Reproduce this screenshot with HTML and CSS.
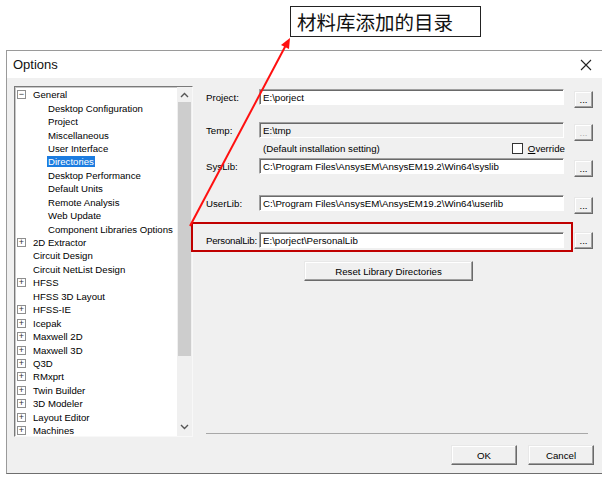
FILE: index.html
```html
<!DOCTYPE html>
<html lang="zh-CN">
<head>
    <meta charset="UTF-8">
    <title>Options</title>
    <link rel="stylesheet" href="styles.css">
</head>
<body>
    <!-- Callout over the screenshot -->
    <div class="callout">材料库添加的目录</div>
    <svg class="arrow" width="602" height="479" viewBox="0 0 602 479">
        <line x1="190" y1="226" x2="286" y2="45" stroke="#ff1010" stroke-width="2"/>
        <polygon points="290,38 289,49 281,45" fill="#ff1010"/>
    </svg>

    <div class="dialog">
        <div class="titlebar">
            <span class="title">Options</span>
            <svg class="close" width="12" height="12" viewBox="0 0 12 12">
                <path d="M1 1 L11 11 M11 1 L1 11" stroke="#222" stroke-width="1.1" fill="none"/>
            </svg>
        </div>

        <div class="body">
            <div class="main">
                <!-- Category tree -->
                <div class="tree">
                    <div class="tree-list">
                        <div class="node"><span class="toggle">&minus;</span>General</div>
                        <div class="node child">Desktop Configuration</div>
                        <div class="node child">Project</div>
                        <div class="node child">Miscellaneous</div>
                        <div class="node child">User Interface</div>
                        <div class="node child"><span class="selected">Directories</span></div>
                        <div class="node child">Desktop Performance</div>
                        <div class="node child">Default Units</div>
                        <div class="node child">Remote Analysis</div>
                        <div class="node child">Web Update</div>
                        <div class="node child">Component Libraries Options</div>
                        <div class="node"><span class="toggle">+</span>2D Extractor</div>
                        <div class="node">Circuit Design</div>
                        <div class="node">Circuit NetList Design</div>
                        <div class="node"><span class="toggle">+</span>HFSS</div>
                        <div class="node">HFSS 3D Layout</div>
                        <div class="node"><span class="toggle">+</span>HFSS-IE</div>
                        <div class="node"><span class="toggle">+</span>Icepak</div>
                        <div class="node"><span class="toggle">+</span>Maxwell 2D</div>
                        <div class="node"><span class="toggle">+</span>Maxwell 3D</div>
                        <div class="node"><span class="toggle">+</span>Q3D</div>
                        <div class="node"><span class="toggle">+</span>RMxprt</div>
                        <div class="node"><span class="toggle">+</span>Twin Builder</div>
                        <div class="node"><span class="toggle">+</span>3D Modeler</div>
                        <div class="node"><span class="toggle">+</span>Layout Editor</div>
                        <div class="node"><span class="toggle">+</span>Machines</div>
                    </div>
                    <div class="scrollbar">
                        <svg class="chev" width="9" height="6" viewBox="0 0 9 6"><path d="M1 5 L4.5 1.5 L8 5" stroke="#555" stroke-width="1.4" fill="none"/></svg>
                        <div class="thumb"></div>
                        <svg class="chev chev-down" width="9" height="6" viewBox="0 0 9 6"><path d="M1 1 L4.5 4.5 L8 1" stroke="#555" stroke-width="1.4" fill="none"/></svg>
                    </div>
                </div>

                <!-- Directories page -->
                <div class="page">
                    <div class="row row-project">
                        <div class="field">
                            <label>Project:</label>
                            <div class="input">E:\porject</div>
                        </div>
                        <button class="browse">...</button>
                    </div>

                    <div class="row row-temp">
                        <div class="field">
                            <label>Temp:</label>
                            <div class="input disabled">E:\tmp</div>
                        </div>
                        <button class="browse" disabled>...</button>
                    </div>

                    <div class="note">
                        <span>(Default installation setting)</span>
                        <span class="check"><span class="box"></span><u>O</u>verride</span>
                    </div>

                    <div class="row row-syslib">
                        <div class="field">
                            <label>SysLib:</label>
                            <div class="input">C:\Program Files\AnsysEM\AnsysEM19.2\Win64\syslib</div>
                        </div>
                        <button class="browse">...</button>
                    </div>

                    <div class="row row-userlib">
                        <div class="field">
                            <label>UserLib:</label>
                            <div class="input">C:\Program Files\AnsysEM\AnsysEM19.2\Win64\userlib</div>
                        </div>
                        <button class="browse">...</button>
                    </div>

                    <div class="row row-personal">
                        <div class="field highlight">
                            <label class="tight">PersonalLib:</label>
                            <div class="input">E:\porject\PersonalLib</div>
                        </div>
                        <button class="browse">...</button>
                    </div>

                    <button class="btn reset">Reset Library Directories</button>

                    <div class="page-rule"></div>
                </div>
            </div>

            <div class="footer">
                <button class="btn">OK</button>
                <button class="btn">Cancel</button>
            </div>
        </div>
    </div>
</body>
</html>
```

FILE: styles.css
```css
body {
    margin: 0;
    width: 602px;
    height: 479px;
    background-color: white;
    font-family: "Liberation Sans", Arial, sans-serif;
    font-size: 9.7px;
    color: #000;
    position: relative;
    overflow: hidden;
}

/* Annotation */
.callout {
    position: absolute;
    left: 290px;
    top: 6px;
    width: 183px;
    height: 29px;
    border: 1px solid #222;
    background-color: white;
    font-family: "Noto Sans CJK SC", sans-serif;
    font-size: 19.5px;
    line-height: 29px;
    padding-left: 6px;
    color: #111;
    z-index: 2;
}

.arrow {
    position: absolute;
    left: 0;
    top: 0;
    z-index: 3;
    pointer-events: none;
}

/* Dialog frame */
.dialog {
    margin: 50px 0 0 6px;
    width: 596px;
    border-top: 1px solid #9a9a9a;
    border-left: 1px solid #9a9a9a;
    border-bottom: 1px solid #6e6e6e;
}

.titlebar {
    height: 27px;
    background-color: white;
    display: flex;
    align-items: center;
    justify-content: space-between;
    padding: 0 11px 0 6px;
}

.title {
    font-size: 13px;
    color: #111;
}

.body {
    background-color: #f0f0f0;
    padding-bottom: 8px;
}

.main {
    display: flex;
    height: 362px;
}

/* Tree */
.tree {
    margin: 8px 0 0 7px;
    width: 177px;
    height: 349px;
    display: flex;
    background-color: white;
    border: 1px solid;
    border-color: #7a7a7a #f8f8f8 #f8f8f8 #7a7a7a;
    box-shadow: inset 1px 1px #c8c8c8;
}

.tree-list {
    flex: 1;
    padding-top: 1px;
    overflow: hidden;
    white-space: nowrap;
    font-size: 9.6px;
}

.node {
    height: 13.44px;
    display: flex;
    align-items: center;
    padding-left: 18px;
}

.node.child {
    padding-left: 33px;
}

.toggle {
    width: 7px;
    height: 7px;
    margin-left: -16px;
    margin-right: 7px;
    border: 1px solid #8e8e8e;
    font-size: 9px;
    line-height: 7px;
    text-align: center;
    color: #333;
}

.selected {
    background-color: #1c7ce0;
    color: white;
    padding: 0 1px;
    margin-left: -1px;
    line-height: 11px;
}

.scrollbar {
    width: 15px;
    background-color: #f0f0f0;
    display: flex;
    flex-direction: column;
    align-items: center;
}

.chev {
    margin: 5px 0 4px;
}

.chev-down {
    margin: auto 0 6px;
}

.thumb {
    width: 13px;
    height: 254px;
    background-color: #cdcdcd;
}

/* Directories page */
.page {
    width: 400px;
    padding-top: 11px;
    display: flex;
    flex-direction: column;
}

.row {
    display: flex;
    align-items: flex-start;
}

.row-temp { margin-top: 14px; }
.row-syslib { margin-top: 2px; }
.row-userlib { margin-top: 18px; }
.row-personal { margin-top: 8px; }

.field {
    width: 380px;
    display: flex;
    align-items: center;
    padding: 0 9px 0 13px;
    box-sizing: border-box;
}

.field label {
    width: 53px;
    flex-shrink: 0;
    white-space: nowrap;
}

.field label.tight {
    letter-spacing: -0.25px;
}

.field.highlight {
    width: 382px;
    margin-left: -2px;
    border: 2px solid #c00000;
    padding: 8px 7px 2px 13px;
}

.input {
    flex: 1;
    height: 16px;
    line-height: 15px;
    padding-left: 3px;
    box-sizing: border-box;
    background-color: white;
    border: 1px solid;
    border-color: #a0a0a0 #ffffff #ffffff #a0a0a0;
    box-shadow: inset 1px 1px #6a6a6a;
    white-space: nowrap;
    overflow: hidden;
}

.input.disabled {
    background-color: #f0f0f0;
}

button {
    font-family: "Liberation Sans", Arial, sans-serif;
    font-size: 9.7px;
    color: #000;
    background-color: #f0f0f0;
    border: 1px solid;
    border-color: #e8e8e8 #6a6a6a #6a6a6a #e8e8e8;
    box-shadow: inset -1px -1px #a0a0a0, inset 1px 1px #ffffff;
    padding: 0;
}

.browse {
    width: 19px;
    height: 17px;
    margin: 2px 0 0 1px;
    line-height: 12px;
}

.row-personal .browse {
    margin-top: 10px;
}

.browse:disabled {
    color: #b0b0b0;
}

.note {
    height: 15px;
    display: flex;
    align-items: center;
    padding-left: 70px;
    width: 372px;
    justify-content: space-between;
    box-sizing: border-box;
}

.check {
    display: flex;
    align-items: center;
}

.box {
    width: 9px;
    height: 9px;
    border: 1px solid #333;
    background-color: white;
    margin-right: 5px;
}

.btn.reset {
    width: 169px;
    height: 20px;
    margin: 9px 0 0 111px;
}

.page-rule {
    margin: auto 0 6px 13px;
    width: 382px;
    border-top: 1px solid #a8a8a8;
}

/* Footer buttons */
.footer {
    display: flex;
    justify-content: flex-end;
    gap: 11px;
    padding: 5px 9px 0 0;
}

.footer .btn {
    width: 66px;
    height: 20px;
}
```
